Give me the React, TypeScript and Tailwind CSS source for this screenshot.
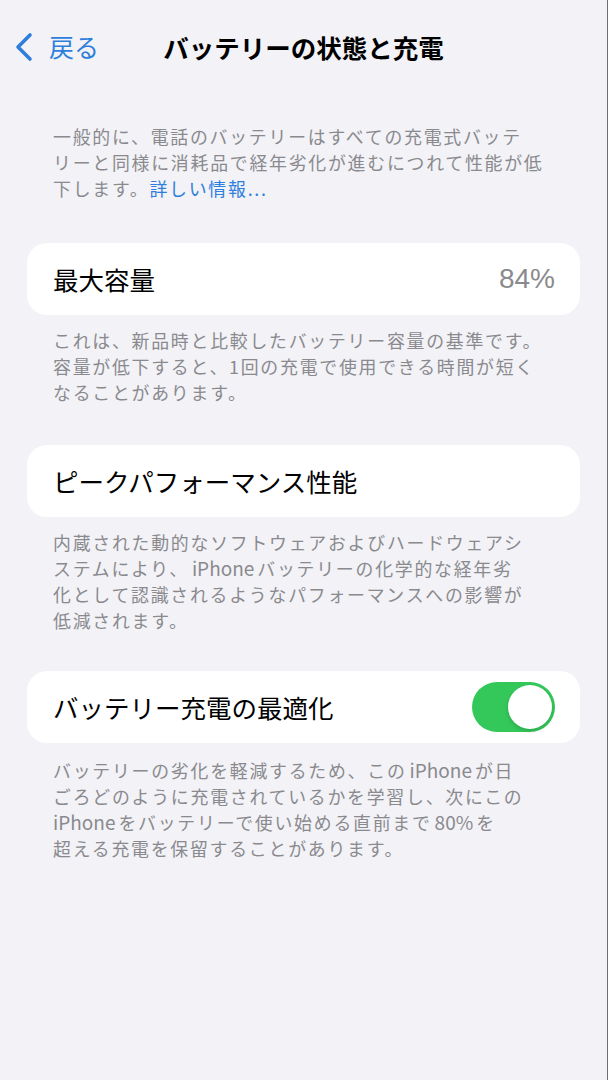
const font = "font-['Noto_Sans_CJK_JP','Noto_Sans',sans-serif]";

const FooterText = ({ lines }: { lines: React.ReactNode[] }) => (
  <div className="px-[53px] text-[17.9px] leading-[26px] tracking-[1.75px] text-[#8a8a8e]">
    {lines.map((line, i) => (
      <div key={i} className="whitespace-nowrap">
        {line}
      </div>
    ))}
  </div>
);

const Latin = ({ children, first }: { children: React.ReactNode; first?: boolean }) => (
  <span className={first ? "tracking-normal text-[19px] mr-[3px]" : "tracking-normal text-[19px] mx-[3px]"}>{children}</span>
);

const Card = ({ children }: { children: React.ReactNode }) => (
  <div className="mx-[27px] h-[72px] rounded-[20px] bg-white pl-[26px] pr-[25px] flex items-center justify-between">
    {children}
  </div>
);

export default function App() {
  return (
    <div className={`${font} min-h-screen w-[608px] bg-[#f2f2f7] border-r border-[#6e6e6e]`}>
      <div className="h-[94px] grid grid-cols-[1fr_auto_1fr] items-center">
        <div className="flex items-center pl-[14px] text-[#2e7fdc]">
          <svg width="20" height="30" viewBox="0 0 20 30" fill="none">
            <path d="M16 3 L4 15 L16 27" stroke="#2e7fdc" strokeWidth="3.6" strokeLinecap="round" strokeLinejoin="round" />
          </svg>
          <span className="ml-[15px] text-[25px]">戻る</span>
        </div>
        <div className="text-[25.5px] font-semibold text-black">バッテリーの状態と充電</div>
        <div />
      </div>

      <div className="mt-[29px]">
        <FooterText
          lines={[
            "一般的に、電話のバッテリーはすべての充電式バッテ",
            "リーと同様に消耗品で経年劣化が進むにつれて性能が低",
            <>
              下します。<span className="text-[#2e7fdc]">詳しい情報...</span>
            </>,
          ]}
        />
      </div>

      <div className="mt-[42px]">
        <Card>
          <span className="text-[25.5px] text-black">最大容量</span>
          <span className="text-[28px] text-[#8a8a8e] font-['Liberation_Sans',sans-serif]">84%</span>
        </Card>
        <div className="mt-[12px]">
          <FooterText
            lines={[
              "これは、新品時と比較したバッテリー容量の基準です。",
              "容量が低下すると、1回の充電で使用できる時間が短く",
              "なることがあります。",
            ]}
          />
        </div>
      </div>

      <div className="mt-[40px]">
        <Card>
          <span className="text-[25.5px] text-black">ピークパフォーマンス性能</span>
        </Card>
        <div className="mt-[12px]">
          <FooterText
            lines={[
              "内蔵された動的なソフトウェアおよびハードウェアシ",
              <>
                ステムにより、<Latin>iPhone</Latin>バッテリーの化学的な経年劣
              </>,
              "化として認識されるようなパフォーマンスへの影響が",
              "低減されます。",
            ]}
          />
        </div>
      </div>

      <div className="mt-[38px]">
        <Card>
          <span className="text-[25.5px] text-black">バッテリー充電の最適化</span>
          <div className="w-[83px] h-[50px] rounded-full bg-[#34c759] flex items-center justify-end pr-[3px]">
            <div className="w-[44px] h-[44px] rounded-full bg-white shadow-[0_2px_4px_rgba(0,0,0,0.15)]" />
          </div>
        </Card>
        <div className="mt-[14px]">
          <FooterText
            lines={[
              <>
                バッテリーの劣化を軽減するため、この<Latin>iPhone</Latin>が日
              </>,
              "ごろどのように充電されているかを学習し、次にこの",
              <>
                <Latin first>iPhone</Latin>をバッテリーで使い始める直前まで<Latin>80%</Latin>を
              </>,
              "超える充電を保留することがあります。",
            ]}
          />
        </div>
      </div>
    </div>
  );
}
